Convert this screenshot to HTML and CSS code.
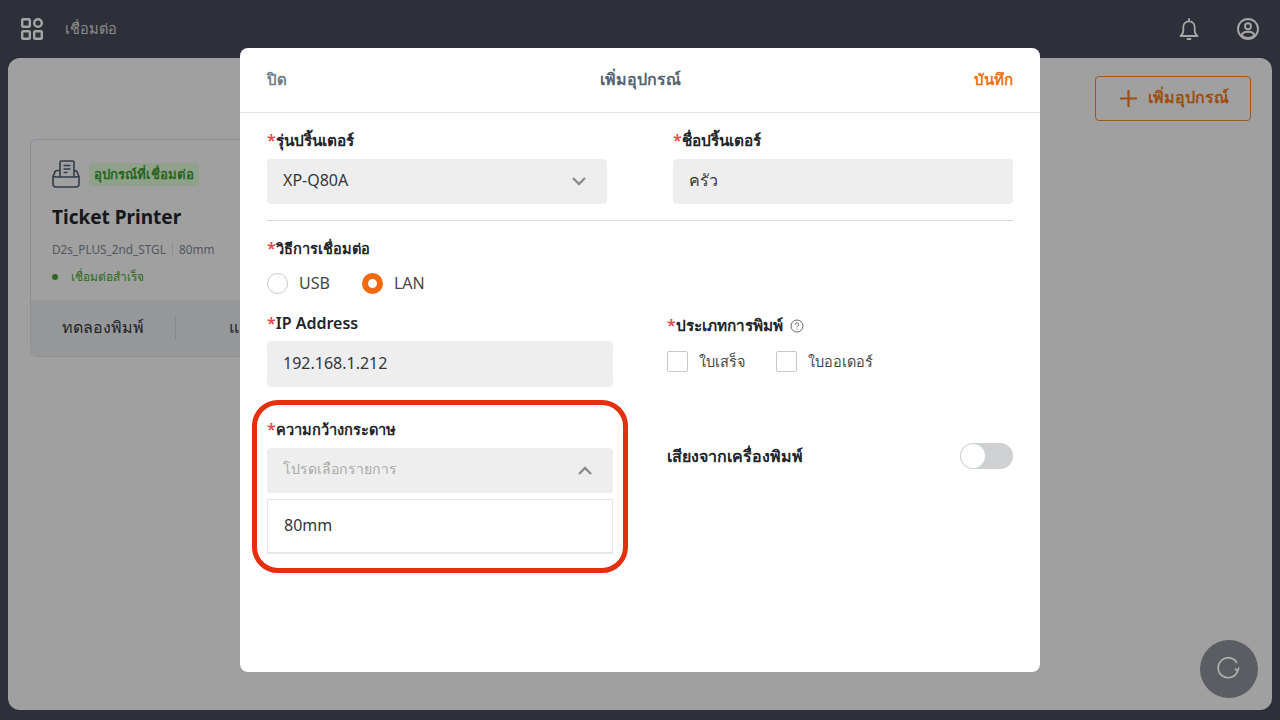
FILE: index.html
```html
<!DOCTYPE html>
<html lang="th">
<head>
    <meta charset="UTF-8">
    <meta name="viewport" content="width=device-width, initial-scale=1.0">
    <title>เชื่อมต่อ</title>
    <link rel="stylesheet" href="styles.css">
</head>
<body>

<header class="topbar">
    <div class="topbar-left">
        <svg class="apps-icon" width="22" height="22" viewBox="0 0 22 22" fill="none" stroke="currentColor" stroke-width="2.4">
            <rect x="1.200" y="1.200" width="7.600" height="7.600" rx="1"/>
            <circle cx="17" cy="5" r="3.800"/>
            <rect x="1.200" y="13.200" width="7.600" height="7.600" rx="1"/>
            <rect x="13.200" y="13.200" width="7.600" height="7.600" rx="1"/>
        </svg>
        <span class="topbar-title">เชื่อมต่อ</span>
    </div>
    <div class="topbar-right">
        <svg width="20" height="22" viewBox="0 0 20 22" fill="none" stroke="currentColor" stroke-width="1.800" stroke-linejoin="round" stroke-linecap="round">
            <path d="M1.500 18h17c-1.800-1.200-2.800-2.800-2.800-5.500V9a5.700 5.700 0 0 0-11.400 0v3.500c0 2.700-1 4.300-2.800 5.500z"/>
            <path d="M10 1v2"/>
            <path d="M8.500 21h3"/>
        </svg>
        <svg width="22" height="22" viewBox="0 0 22 22" fill="none" stroke="currentColor" stroke-width="1.900">
            <circle cx="11" cy="11" r="10"/>
            <circle cx="11" cy="8.300" r="3"/>
            <path d="M4.500 17.500c.6-2.500 3-3.700 6.500-3.700s5.900 1.200 6.500 3.700c-1.700 1.500-4 2.500-6.500 2.500s-4.800-1-6.500-2.500z"/>
        </svg>
    </div>
</header>

<main class="content">
    <div class="content-actions">
        <button class="add-button">
            <svg width="17" height="17" viewBox="0 0 17 17" fill="none" stroke="currentColor" stroke-width="2.200">
                <path d="M8.500 0v17M0 8.500h17"/>
            </svg>
            <span class="add-text">เพิ่มอุปกรณ์</span>
        </button>
    </div>

    <div class="printer-card">
        <div class="printer-body">
            <div class="printer-head">
                <svg width="28" height="28" viewBox="0 0 28 28" fill="none" stroke="currentColor" stroke-width="1.600" stroke-linejoin="round">
                    <path d="M8 17V2.500A1.500 1.500 0 0 1 9.500 1h11A1.500 1.500 0 0 1 22 2.500V17"/>
                    <path d="M11.500 5.500h7M11.500 9h7M11.500 12.500h4"/>
                    <path d="M8 10.500H5.500a3 3 0 0 0-3 2.500L1 16.500V24a3 3 0 0 0 3 3h20a3 3 0 0 0 3-3v-7.500L25.500 13a3 3 0 0 0-3-2.500H22"/>
                    <path d="M1 16.500l4 .5h18l4-.5"/>
                </svg>
                <span class="status-tag">อุปกรณ์ที่เชื่อมต่อ</span>
            </div>
            <h3 class="printer-name">Ticket Printer</h3>
            <p class="printer-meta">D2s_PLUS_2nd_STGL <span class="meta-sep"></span> 80mm</p>
            <p class="printer-state"><span class="state-dot"></span>เชื่อมต่อสำเร็จ</p>
        </div>
        <div class="printer-actions">
            <span class="printer-action">ทดลองพิมพ์</span>
            <span class="printer-action">แก้ไข</span>
        </div>
    </div>
</main>

<div class="overlay"></div>

<section class="modal">
    <div class="modal-header">
        <span class="modal-close">ปิด</span>
        <span class="modal-title">เพิ่มอุปกรณ์</span>
        <span class="modal-save">บันทึก</span>
    </div>

    <div class="modal-body">
        <div class="row row-top">
            <div class="field">
                <label class="field-label"><span class="req">*</span>รุ่นปริ้นเตอร์</label>
                <div class="input-box">
                    <span>XP-Q80A</span>
                    <svg class="chevron" width="14" height="9" viewBox="0 0 14 9" fill="none" stroke="currentColor" stroke-width="2.400"><path d="M1 1l6 6 6-6"/></svg>
                </div>
            </div>
            <div class="field">
                <label class="field-label"><span class="req">*</span>ชื่อปริ้นเตอร์</label>
                <div class="input-box"><span>ครัว</span></div>
            </div>
        </div>

        <hr class="divider">

        <div class="connect">
            <label class="field-label label-thai"><span class="req">*</span>วิธีการเชื่อมต่อ</label>
            <div class="radio-group">
                <span class="radio-item"><span class="radio"></span>USB</span>
                <span class="radio-item"><span class="radio radio-on"></span>LAN</span>
            </div>
        </div>

        <div class="row row-lower">
            <div class="col">
                <div class="field">
                    <label class="field-label label-latin"><span class="req">*</span>IP Address</label>
                    <div class="input-box input-ip"><span>192.168.1.212</span></div>
                </div>
                <div class="field field-paper">
                    <label class="field-label label-thai"><span class="req">*</span>ความกว้างกระดาษ</label>
                    <div class="input-box placeholder">
                        <span>โปรดเลือกรายการ</span>
                        <svg class="chevron" width="14" height="9" viewBox="0 0 14 9" fill="none" stroke="currentColor" stroke-width="2.400"><path d="M1 8l6-6 6 6"/></svg>
                    </div>
                    <div class="dropdown">80mm</div>
                    <div class="highlight"></div>
                </div>
            </div>
            <div class="col">
                <div class="print-type">
                    <label class="field-label"><span class="req">*</span>ประเภทการพิมพ์
                        <svg class="help" width="14" height="14" viewBox="0 0 14 14" fill="none" stroke="currentColor" stroke-width="1">
                            <circle cx="7" cy="7" r="6"/>
                            <path d="M5.300 5.500a1.700 1.700 0 1 1 2.600 1.400c-.6.400-.9.700-.9 1.400"/>
                            <path d="M7 9.600v1"/>
                        </svg>
                    </label>
                    <div class="check-group">
                        <span class="check-item"><span class="checkbox"></span>ใบเสร็จ</span>
                        <span class="check-item"><span class="checkbox"></span>ใบออเดอร์</span>
                    </div>
                </div>
                <div class="sound-row">
                    <span class="sound-label">เสียงจากเครื่องพิมพ์</span>
                    <span class="toggle"><span class="toggle-knob"></span></span>
                </div>
            </div>
        </div>
    </div>
</section>

<div class="fab">
    <svg width="24" height="24" viewBox="0 0 24 24" fill="none" stroke="currentColor" stroke-width="1.600">
        <path d="M20.800 13.500A10 10 0 1 1 20 6"/>
        <path d="M22 10.500l-1.500 3.500-2.500-2.500"/>
    </svg>
</div>

</body>
</html>
```

FILE: styles.css
```css
* {
    box-sizing: border-box;
}
body {
    font-family: "Noto Sans", "Open Sans", sans-serif;
    margin: 0;
    width: 1280px;
    height: 720px;
    overflow: hidden;
    background-color: #454b56;
    color: #33363b;
    font-size: 16px;
    position: relative;
}
.topbar {
    height: 58px;
    padding: 0 21px;
    display: flex;
    align-items: center;
    justify-content: space-between;
    color: #fff;
}
.topbar-left {
    display: flex;
    align-items: center;
    gap: 22px;
}
.topbar-title {
    font-size: 14.5px;
    color: #d8d8d8;
    margin-bottom: 2px;
}
.topbar-right {
    display: flex;
    align-items: center;
    gap: 38px;
}
.content {
    height: 652px;
    margin: 0 8px;
    background-color: #f6f6f6;
    border-radius: 12px;
    padding: 18px 21px 0 22px;
}
.content-actions {
    display: flex;
    justify-content: flex-end;
}
.add-button {
    width: 156px;
    height: 45px;
    padding: 0 0 0 2px;
    display: flex;
    align-items: center;
    justify-content: center;
    gap: 11px;
    background: transparent;
    border: 1px solid #f5842a;
    border-radius: 4px;
    color: #f07a20;
    font-family: inherit;
    font-size: 16px;
    font-weight: 600;
}
.add-text {
    margin-bottom: 2px;
}
.printer-card {
    width: 420px;
    height: 218px;
    margin-top: 18px;
    border: 1px solid #d8dce2;
    border-radius: 6px;
    overflow: hidden;
    display: flex;
    flex-direction: column;
}
.printer-body {
    flex: 1;
    padding: 20px 21px 0;
}
.printer-head {
    display: flex;
    align-items: center;
    gap: 9px;
    color: #4c5b70;
    height: 28px;
}
.status-tag {
    background-color: #dcf7d4;
    color: #3f9a2e;
    font-size: 13.2px;
    font-weight: 600;
    padding: 0 5px;
    height: 23px;
    line-height: 23px;
    border-radius: 3px;
}
.printer-name {
    margin: 16px 0 0;
    font-size: 19px;
    font-weight: 700;
    line-height: 27px;
    color: #22252a;
}
.printer-meta {
    margin: 10px 0 0;
    font-size: 11.8px;
    line-height: 16px;
    color: #7e8794;
}
.meta-sep {
    display: inline-block;
    width: 1px;
    height: 14px;
    margin: 0 3px;
    vertical-align: -3px;
    background-color: #d8dce2;
}
.printer-state {
    margin: 11px 0 0;
    font-size: 12px;
    line-height: 18px;
    color: #43a32c;
    display: flex;
    align-items: center;
}
.state-dot {
    width: 6px;
    height: 6px;
    margin-right: 13px;
    border-radius: 50%;
    background-color: #43a32c;
}
.printer-actions {
    height: 56px;
    padding-bottom: 2px;
    background-color: #e6e8ec;
    display: flex;
    align-items: center;
}
.printer-action {
    width: 145px;
    font-size: 16px;
    text-align: center;
    color: #33363b;
    border-right: 1px solid #d0d3d8;
}
.overlay {
    position: absolute;
    inset: 0;
    background-color: rgba(0, 0, 0, 0.35);
}
.modal {
    position: absolute;
    left: 240px;
    top: 48px;
    width: 800px;
    height: 624px;
    background-color: #fff;
    border-radius: 8px;
}
.modal-header {
    height: 65px;
    padding: 0 27px;
    display: flex;
    align-items: center;
    justify-content: space-between;
    border-bottom: 1px solid #e3e3e3;
    font-size: 15px;
    font-weight: 600;
}
.modal-close {
    flex: 1;
    color: #6e7f8f;
}
.modal-title {
    font-size: 16px;
    margin-bottom: 2px;
    color: #566573;
}
.modal-save {
    flex: 1;
    text-align: right;
    color: #ee7413;
}
.modal-body {
    padding: 15px 27px 0;
}
.row {
    display: flex;
    justify-content: space-between;
}
.row-top .field {
    width: 340px;
}
.field-label {
    display: block;
    font-size: 15.3px;
    font-weight: 600;
    line-height: 24px;
    color: #22252a;
}
.label-thai {
    font-size: 14.6px;
}
.label-latin {
    font-size: 16px;
}
.req {
    color: #e5484d;
    font-size: 16px;
}
.input-box {
    margin-top: 7px;
    height: 45px;
    padding: 0 16px 3px;
    display: flex;
    align-items: center;
    justify-content: space-between;
    background-color: #eeeeee;
    border-radius: 4px;
    font-size: 16px;
    color: #33363b;
}
.input-ip {
    margin-top: 6px;
    height: 46px;
    padding-bottom: 2px;
}
.chevron {
    color: #8c8c8c;
    margin: 3px 5px 0 0;
}
.placeholder {
    font-size: 14.1px;
    color: #a9a9a9;
}
.divider {
    margin: 16px 0 0;
    border: 0;
    border-top: 1px solid #d9d9d9;
}
.connect {
    margin-top: 15px;
}
.radio-group {
    display: flex;
    gap: 32px;
    margin-top: 12px;
}
.radio-item {
    display: flex;
    align-items: center;
    gap: 11px;
    height: 22px;
    font-size: 16px;
    color: #44474c;
}
.radio {
    width: 21px;
    height: 21px;
    background-color: #fff;
    border: 1px solid #c8c8c8;
    border-radius: 50%;
}
.radio-on {
    border: 6px solid #f26a10;
}
.row-lower {
    margin-top: 17px;
}
.col {
    width: 346px;
}
.field-paper {
    position: relative;
    margin-top: 30px;
}
.dropdown {
    margin-top: 6px;
    height: 55px;
    padding: 0 16px 2px;
    display: flex;
    align-items: center;
    background-color: #fff;
    border: 1px solid #e4e6ea;
    border-bottom-width: 2px;
    font-size: 16px;
    color: #33363b;
}
.highlight {
    position: absolute;
    left: -15px;
    top: -17px;
    width: 376px;
    height: 173px;
    border: 5px solid #e5300f;
    border-radius: 26px;
}
.print-type {
    padding-top: 2px;
}
.help {
    color: #666;
    margin-left: 3px;
    vertical-align: -2px;
}
.check-group {
    display: flex;
    gap: 31px;
    margin-top: 13px;
}
.check-item {
    display: flex;
    align-items: center;
    gap: 11px;
    height: 22px;
    font-size: 14.5px;
    color: #44474c;
}
.checkbox {
    width: 21px;
    height: 21px;
    background-color: #fff;
    border: 1px solid #c8c8c8;
    border-radius: 2px;
}
.sound-row {
    margin-top: 71px;
    display: flex;
    align-items: center;
    justify-content: space-between;
}
.sound-label {
    font-size: 16px;
    font-weight: 600;
    color: #22252a;
}
.toggle {
    width: 53px;
    height: 26px;
    padding: 1px;
    background-color: #cfd0d2;
    border-radius: 13px;
}
.toggle-knob {
    display: block;
    width: 24px;
    height: 24px;
    background-color: #fff;
    border-radius: 50%;
}
.fab {
    position: absolute;
    left: 1200px;
    top: 640px;
    width: 58px;
    height: 58px;
    display: flex;
    align-items: center;
    justify-content: center;
    border-radius: 50%;
    background-color: #5b5d62;
    color: #b3b3b3;
}
```
